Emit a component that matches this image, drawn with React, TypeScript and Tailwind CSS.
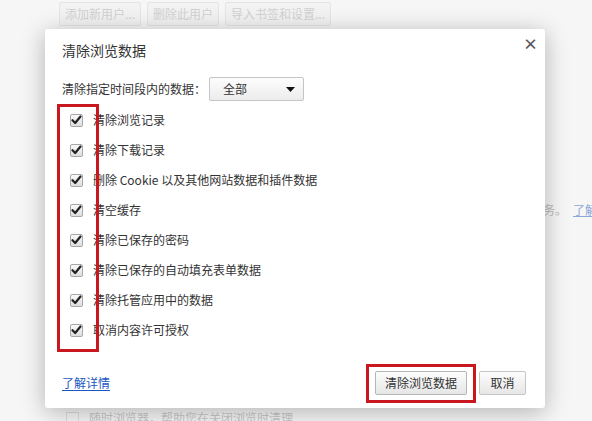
import React from "react";

const items = [
  "清除浏览记录",
  "清除下载记录",
  "删除 Cookie 以及其他网站数据和插件数据",
  "清空缓存",
  "清除已保存的密码",
  "清除已保存的自动填充表单数据",
  "清除托管应用中的数据",
  "取消内容许可授权",
];

const font = "font-['Microsoft_YaHei','Noto_Sans_CJK_SC',sans-serif]";

const CheckBox = () => (
  <span className="w-[13px] h-[13px] rounded-[2px] border border-[#a8a8a8] bg-gradient-to-b from-[#fafafa] to-[#dedede] flex items-center justify-center shrink-0">
    <svg width="11" height="10" viewBox="0 0 11 10">
      <path d="M1.5 5.2 L4.2 8 L9.5 1.5" fill="none" stroke="#222" strokeWidth="2.2" strokeLinecap="round" strokeLinejoin="round" />
    </svg>
  </span>
);

const App = () => {
  return (
    <div className={`relative w-[592px] h-[421px] overflow-hidden bg-[#f6f6f6] ${font} text-[12px] text-[#333]`}>
      {/* faded page behind the dialog */}
      <div className="flex gap-[6px] pl-[59px] pt-[2px] opacity-40">
        <span className="h-[24px] px-[5px] border border-[#ccc] bg-[#eee] rounded-[2px] flex items-center text-[#999]">添加新用户...</span>
        <span className="h-[24px] px-[5px] border border-[#ccc] bg-[#eee] rounded-[2px] flex items-center text-[#999]">删除此用户</span>
        <span className="h-[24px] px-[5px] border border-[#ccc] bg-[#eee] rounded-[2px] flex items-center text-[#999]">导入书签和设置...</span>
      </div>
      <div className="absolute left-[543px] top-[201px] flex gap-[6px] whitespace-nowrap text-[#bbb]">
        <span>务。</span>
        <span className="text-[#8aa8d8] underline">了解</span>
      </div>
      <div className="absolute left-[66px] top-[409px] flex items-center gap-[10px] text-[#c8c8c8]">
        <span className="w-[13px] h-[13px] border border-[#ddd]" />
        <span>随时浏览器，帮助您在关闭浏览时清理</span>
      </div>

      {/* dialog */}
      <div className="absolute left-[45px] top-[29px] w-[500px] h-[379px] bg-white rounded-[3px] shadow-[0_4px_23px_rgba(0,0,0,0.28)] flex flex-col px-[17px]">
        <div className="flex items-start justify-between pt-[11px]">
          <h1 className="text-[14px] text-[#333] leading-[20px]">清除浏览数据</h1>
          <span className="text-[#555] text-[15px] font-bold leading-[14px] -mt-[3px] -mr-[10px]">×</span>
        </div>
        <div className="flex items-center mt-[17px] h-[24px]">
          <span>清除指定时间段内的数据：</span>
          <div className="ml-[3px] w-[95px] h-[24px] border border-[#c5c5c5] rounded-[2px] bg-gradient-to-b from-[#fdfdfd] to-[#ececec] flex items-center justify-between pl-[13px] pr-[8px]">
            <span>全部</span>
            <svg width="9" height="5" viewBox="0 0 9 5"><path d="M0 0h9L4.5 5z" fill="#111" /></svg>
          </div>
        </div>
        <ul className="mt-[4px] flex flex-col">
          {items.map((t) => (
            <li key={t} className="h-[30px] flex items-center gap-[10px] pl-[8px]">
              <CheckBox />
              <span>{t}</span>
            </li>
          ))}
        </ul>
        <div className="mt-auto mb-[13px] flex items-center justify-between">
          <a className="text-[#1b56c4] underline underline-offset-2">了解详情</a>
          <div className="flex gap-[12px] mr-[2px]">
            <button className="h-[24px] w-[92px] border border-[#b5b5b5] rounded-[2px] bg-gradient-to-b from-[#fdfdfd] to-[#e6e6e6] text-[#333]">清除浏览数据</button>
            <button className="h-[24px] w-[47px] border border-[#c5c5c5] rounded-[2px] bg-gradient-to-b from-[#fdfdfd] to-[#e6e6e6] text-[#333]">取消</button>
          </div>
        </div>
      </div>

      {/* red annotation boxes */}
      <div className="absolute left-[57px] top-[104px] w-[42px] h-[248px] border-[3px] border-[#c8171e]" />
      <div className="absolute left-[366px] top-[364px] w-[110px] h-[39px] border-[3px] border-[#c8171e]" />
    </div>
  );
};

export default App;
